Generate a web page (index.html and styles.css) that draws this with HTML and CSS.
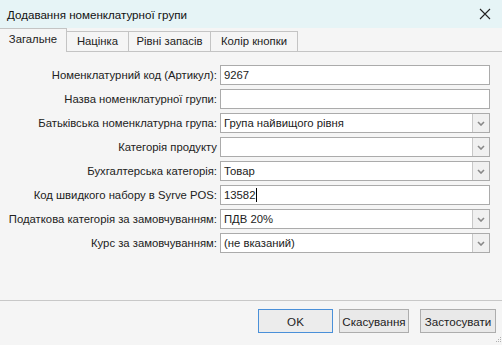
FILE: index.html
```html
<!DOCTYPE html>
<html lang="uk">
<head>
<meta charset="utf-8">
<title>Додавання номенклатурної групи</title>
<link rel="stylesheet" href="styles.css">
</head>
<body>
<div class="window">
  <div class="titlebar">
    <span class="title">Додавання номенклатурної групи</span>
    <svg class="close" width="12" height="12" viewBox="0 0 12 12"><path d="M1 1 L11 11 M11 1 L1 11" stroke="#222" stroke-width="1.1" fill="none"/></svg>
  </div>
  <div class="tabs">
    <div class="tab active t1">Загальне</div>
    <div class="tab t2">Націнка</div>
    <div class="tab t3">Рівні запасів</div>
    <div class="tab t4">Колір кнопки</div>
    <div class="tab-fill"></div>
  </div>
  <div class="panel">
    <div class="form">
      <label class="lbl">Номенклатурний код (Артикул):</label>
      <div class="field"><span class="val">9267</span></div>

      <label class="lbl">Назва номенклатурної групи:</label>
      <div class="field"></div>

      <label class="lbl">Батьківська номенклатурна група:</label>
      <div class="field combo"><span class="val">Група найвищого рівня</span><span class="drop"><svg width="8" height="5" viewBox="0 0 8 5"><path d="M1 1 L4 4 L7 1" stroke="#888" stroke-width="1.6" fill="none"/></svg></span></div>

      <label class="lbl">Категорія продукту</label>
      <div class="field combo"><span class="val"></span><span class="drop"><svg width="8" height="5" viewBox="0 0 8 5"><path d="M1 1 L4 4 L7 1" stroke="#888" stroke-width="1.6" fill="none"/></svg></span></div>

      <label class="lbl">Бухгалтерська категорія:</label>
      <div class="field combo"><span class="val">Товар</span><span class="drop"><svg width="8" height="5" viewBox="0 0 8 5"><path d="M1 1 L4 4 L7 1" stroke="#888" stroke-width="1.6" fill="none"/></svg></span></div>

      <label class="lbl">Код швидкого набору в Syrve POS:</label>
      <div class="field"><span class="val fixed">13582</span><span class="caret"></span></div>

      <label class="lbl">Податкова категорія за замовчуванням:</label>
      <div class="field combo"><span class="val">ПДВ 20%</span><span class="drop"><svg width="8" height="5" viewBox="0 0 8 5"><path d="M1 1 L4 4 L7 1" stroke="#888" stroke-width="1.6" fill="none"/></svg></span></div>

      <label class="lbl">Курс за замовчуванням:</label>
      <div class="field combo"><span class="val">(не вказаний)</span><span class="drop"><svg width="8" height="5" viewBox="0 0 8 5"><path d="M1 1 L4 4 L7 1" stroke="#888" stroke-width="1.6" fill="none"/></svg></span></div>
    </div>
  </div>
  <div class="footer">
    <button class="btn default b-ok">OK</button>
    <button class="btn b-cancel">Скасування</button>
    <button class="btn b-apply">Застосувати</button>
    <svg class="grip" width="7" height="7" viewBox="0 0 7 7"><g fill="#b0b0b0"><rect x="5" y="1" width="1" height="1"/><rect x="3" y="3" width="1" height="1"/><rect x="5" y="3" width="1" height="1"/><rect x="1" y="5" width="1" height="1"/><rect x="3" y="5" width="1" height="1"/><rect x="5" y="5" width="1" height="1"/></g></svg>
  </div>
</div>
</body>
</html>
```
FILE: styles.css
```css
html, body {
  margin: 0;
  padding: 0;
  background: #f5f5f5;
}
* {
  box-sizing: border-box;
}
.window {
  width: 502px;
  height: 345px;
  display: flex;
  flex-direction: column;
  background: #f5f5f5;
  font-family: "Liberation Sans", Arial, sans-serif;
  font-size: 11.3px;
  color: #222;
  overflow: hidden;
  position: relative;
}
.titlebar {
  height: 28px;
  background: #e6f4f6;
  display: flex;
  align-items: center;
  justify-content: space-between;
  padding: 0 11px 0 7px;
  flex: none;
}
.title {
  font-size: 11.6px;
  color: #111;
}
.tabs {
  display: flex;
  align-items: flex-end;
  height: 24px;
  flex: none;
}
.tab {
  height: 21px;
  line-height: 19px;
  text-align: center;
  border: 1px solid #c4c4c4;
  border-left: none;
  background: #f5f5f5;
}
.tab.active {
  height: 24px;
  line-height: 21px;
  border-bottom: none;
}
.t1 { width: 67px; }
.t2 { width: 62px; }
.t3 { width: 82px; }
.t4 { width: 87px; }
.tab-fill {
  flex: 1;
  border-bottom: 1px solid #c4c4c4;
}
.panel {
  flex: 1;
  padding-top: 13px;
}
.form {
  display: grid;
  grid-template-columns: 217px 270px;
  column-gap: 3px;
  row-gap: 4px;
}
.lbl {
  text-align: right;
  align-self: center;
  white-space: nowrap;
}
.field {
  height: 20px;
  border: 1px solid #ababab;
  background: #fff;
  display: flex;
  align-items: center;
  padding-left: 3px;
}
.val {
  flex: 1;
  white-space: nowrap;
}
.val.fixed {
  flex: none;
}
.drop {
  width: 17px;
  height: 18px;
  background: #f0f0f0;
  border-left: 1px solid #c8c8c8;
  display: flex;
  align-items: center;
  justify-content: center;
}
.caret {
  width: 1px;
  height: 14px;
  background: #000;
  margin-left: 1px;
}
.footer {
  height: 45px;
  border-top: 1px solid #c8c8c8;
  display: flex;
  align-items: flex-start;
  justify-content: flex-end;
  padding: 8px 6px 0 0;
  flex: none;
  position: relative;
}
.btn {
  height: 24px;
  padding: 0;
  border: 1px solid #adadad;
  background: #e9e9e9;
  font-family: "Liberation Sans", Arial, sans-serif;
  font-size: 11.6px;
  color: #222;
}
.b-ok { width: 75px; }
.b-cancel { width: 70px; margin-left: 6px; }
.b-apply { width: 76px; margin-left: 11px; }
.btn.default {
  border-color: #4a90d9;
  background: #ececec;
}
.grip {
  position: absolute;
  right: 0;
  bottom: 2px;
}
.close {
  display: block;
}
```
